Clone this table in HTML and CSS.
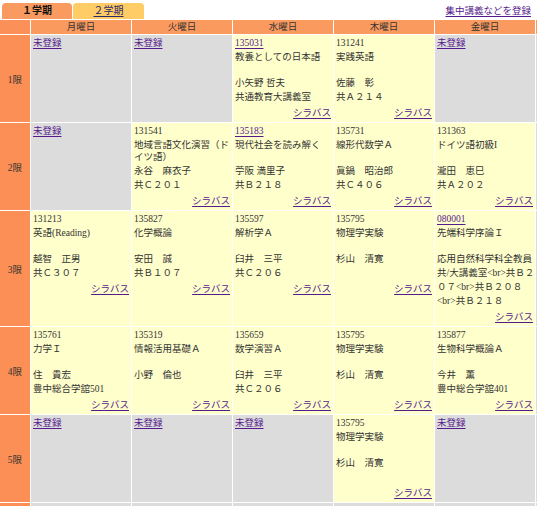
FILE: index.html
```html
<!DOCTYPE html>
<html lang="ja">
<head>
<meta charset="utf-8">
<title>時間割</title>
<link rel="stylesheet" href="styles.css">
</head>
<body>
<div class="top">
  <div class="tabs">
    <div class="tab tab-on">１学期</div>
    <div class="tab tab-off"><a href="#">２学期</a></div>
  </div>
  <a class="extra" href="#">集中講義などを登録</a>
</div>
<table class="tt">
  <colgroup>
    <col class="col-p"><col class="col-d"><col class="col-d"><col class="col-d"><col class="col-d"><col class="col-d"><col class="col-d">
  </colgroup>
  <thead>
    <tr><th class="corner"></th><th>月曜日</th><th>火曜日</th><th>水曜日</th><th>木曜日</th><th>金曜日</th><th></th></tr>
  </thead>
  <tbody>
    <tr>
      <td class="per">1限</td>
      <td class="c off"><div class="code"><a href="#">未登録</a></div></td>
      <td class="c off"><div class="code"><a href="#">未登録</a></div></td>
      <td class="c on"><div class="code"><a href="#">135031</a></div><div class="ttl">教養としての日本語</div><div class="tch">小矢野 哲夫</div><div class="rm">共通教育大講義室</div><div class="syl"><a href="#">シラバス</a></div></td>
      <td class="c on"><div class="code">131241</div><div class="ttl">実践英語</div><div class="tch">佐藤　彰</div><div class="rm">共Ａ２１４</div><div class="syl"><a href="#">シラバス</a></div></td>
      <td class="c off"><div class="code"><a href="#">未登録</a></div></td>
      <td class="c off"></td>
    </tr>
    <tr>
      <td class="per">2限</td>
      <td class="c off"><div class="code"><a href="#">未登録</a></div></td>
      <td class="c on"><div class="code">131541</div><div class="ttl">地域言語文化演習（ド<br>イツ語）</div><div class="tch">永谷　麻衣子</div><div class="rm">共Ｃ２０１</div><div class="syl"><a href="#">シラバス</a></div></td>
      <td class="c on"><div class="code"><a href="#">135183</a></div><div class="ttl">現代社会を読み解く</div><div class="tch">苧阪 満里子</div><div class="rm">共Ｂ２１８</div><div class="syl"><a href="#">シラバス</a></div></td>
      <td class="c on"><div class="code">135731</div><div class="ttl">線形代数学Ａ</div><div class="tch">眞鍋　昭治郎</div><div class="rm">共Ｃ４０６</div><div class="syl"><a href="#">シラバス</a></div></td>
      <td class="c on"><div class="code">131363</div><div class="ttl">ドイツ語初級I</div><div class="tch">瀧田　恵巳</div><div class="rm">共Ａ２０２</div><div class="syl"><a href="#">シラバス</a></div></td>
      <td class="c off"></td>
    </tr>
    <tr>
      <td class="per">3限</td>
      <td class="c on"><div class="code">131213</div><div class="ttl">英語(Reading)</div><div class="tch">越智　正男</div><div class="rm">共Ｃ３０７</div><div class="syl"><a href="#">シラバス</a></div></td>
      <td class="c on"><div class="code">135827</div><div class="ttl">化学概論</div><div class="tch">安田　誠</div><div class="rm">共Ｂ１０７</div><div class="syl"><a href="#">シラバス</a></div></td>
      <td class="c on"><div class="code">135597</div><div class="ttl">解析学Ａ</div><div class="tch">臼井　三平</div><div class="rm">共Ｃ２０６</div><div class="syl"><a href="#">シラバス</a></div></td>
      <td class="c on"><div class="code">135795</div><div class="ttl">物理学実験</div><div class="tch">杉山　清寛</div><div class="rm"></div><div class="syl"><a href="#">シラバス</a></div></td>
      <td class="c on"><div class="code"><a href="#">080001</a></div><div class="ttl">先端科学序論Ｉ</div><div class="tch">応用自然科学科全教員</div><div class="rm">共/大講義室&lt;br&gt;共Ｂ２<br>０７&lt;br&gt;共Ｂ２０８<br>&lt;br&gt;共Ｂ２１８</div><div class="syl"><a href="#">シラバス</a></div></td>
      <td class="c off"></td>
    </tr>
    <tr>
      <td class="per">4限</td>
      <td class="c on"><div class="code">135761</div><div class="ttl">力学Ｉ</div><div class="tch">住　貴宏</div><div class="rm">豊中総合学舘501</div><div class="syl"><a href="#">シラバス</a></div></td>
      <td class="c on"><div class="code">135319</div><div class="ttl">情報活用基礎Ａ</div><div class="tch">小野　倫也</div><div class="rm"></div><div class="syl"><a href="#">シラバス</a></div></td>
      <td class="c on"><div class="code">135659</div><div class="ttl">数学演習Ａ</div><div class="tch">臼井　三平</div><div class="rm">共Ｃ２０６</div><div class="syl"><a href="#">シラバス</a></div></td>
      <td class="c on"><div class="code">135795</div><div class="ttl">物理学実験</div><div class="tch">杉山　清寛</div><div class="rm"></div><div class="syl"><a href="#">シラバス</a></div></td>
      <td class="c on"><div class="code">135877</div><div class="ttl">生物科学概論Ａ</div><div class="tch">今井　薫</div><div class="rm">豊中総合学舘401</div><div class="syl"><a href="#">シラバス</a></div></td>
      <td class="c off"></td>
    </tr>
    <tr>
      <td class="per">5限</td>
      <td class="c off"><div class="code"><a href="#">未登録</a></div></td>
      <td class="c off"><div class="code"><a href="#">未登録</a></div></td>
      <td class="c off"><div class="code"><a href="#">未登録</a></div></td>
      <td class="c on"><div class="code">135795</div><div class="ttl">物理学実験</div><div class="tch">杉山　清寛</div><div class="rm"></div><div class="syl"><a href="#">シラバス</a></div></td>
      <td class="c off"><div class="code"><a href="#">未登録</a></div></td>
      <td class="c off"></td>
    </tr>
    <tr>
      <td class="per"></td>
      <td class="c off tall"></td>
      <td class="c off tall"></td>
      <td class="c off tall"></td>
      <td class="c off tall"></td>
      <td class="c off tall"></td>
      <td class="c off tall"></td>
    </tr>
  </tbody>
</table>
</body>
</html>
```

FILE: styles.css
```css
html {
  overflow: hidden;
}
body {
  margin: 0;
  padding: 0;
  background: #ffffff;
  color: #333333;
  font-family: "Liberation Serif", "Noto Sans CJK JP", serif;
  font-size: 9.5px;
}
a {
  color: #551a8b;
  text-decoration: underline;
  text-underline-offset: 2px;
}

.top {
  display: flex;
  justify-content: space-between;
  align-items: flex-end;
  width: 531px;
  height: 19px;
}
.tabs {
  display: flex;
  gap: 1px;
  padding-left: 2px;
}
.tab {
  height: 16px;
  line-height: 16px;
  text-align: center;
  border-radius: 4px 4px 0 0;
  font-size: 10px;
}
.tab-on {
  width: 70px;
  background: #f99a60;
  color: #111111;
  font-weight: bold;
}
.tab-off {
  width: 71px;
  background: #ffcc66;
}
.tab-off a {
  color: #2a2a6a;
}
.extra {
  line-height: 16px;
}

.tt {
  border-collapse: separate;
  border-spacing: 1px;
  margin-left: -1px;
  table-layout: fixed;
  width: 638px;
}
.col-p {
  width: 30px;
}
.col-d {
  width: 100px;
}
.tt th {
  height: 14px;
  line-height: 14px;
  padding: 0;
  background: #fb9a5e;
  font-weight: normal;
  color: #333333;
  text-align: center;
}
.tt th.corner {
  background: #fb9058;
}
.per {
  background: #fb8f55;
  text-align: center;
  vertical-align: middle;
  padding: 0;
  color: #333333;
}
.c {
  vertical-align: top;
  padding: 1px 2px 1px;
}
.on {
  background: #ffffcc;
}
.off {
  background: #dcdcdc;
}
.tall {
  height: 84px;
}
.code {
  height: 14px;
  line-height: 14px;
}
.ttl {
  line-height: 12px;
  min-height: 24px;
  margin: 1px 0;
}
.tch {
  line-height: 14px;
}
.rm {
  line-height: 14px;
  min-height: 14px;
  white-space: nowrap;
}
.syl {
  line-height: 15px;
  margin-top: 2px;
  text-align: right;
}
```
